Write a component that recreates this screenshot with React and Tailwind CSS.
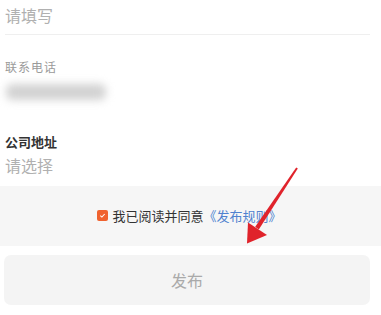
const font = { fontFamily: '"Noto Sans CJK SC", "Noto Sans", sans-serif' };

function Arrow() {
  return (
    <svg className="absolute left-0 top-0 pointer-events-none" width="381" height="315" viewBox="0 0 381 315">
      <polygon points="296.2,167.4 297.8,168.6 258.8,229.4 255.2,226.8" fill="#e0232b" />
      <polygon points="247,243.5 248,222.5 267,235" fill="#e0232b" />
    </svg>
  );
}

export default function App() {
  return (
    <div className="relative w-[381px] h-[315px] overflow-hidden bg-white" style={font}>
      <div className="h-[186px] px-[5px]">
        <div className="h-[35px] w-[365px] border-b border-[#efefef] pt-[7px]">
          <p className="text-[16px] leading-[16px] text-[#b0b0b0]">请填写</p>
        </div>
        <p className="mt-[26px] text-[12px] leading-[12px] text-[#9a9a9a] tracking-[1px]">联系电话</p>
        <div className="mt-[11px] ml-[1px] h-[16px] w-[100px] rounded-[6px] bg-[#d2d2d2] blur-[4px]" />
        <p className="mt-[35px] text-[13px] leading-[13px] font-bold text-[#333]">公司地址</p>
        <p className="mt-[9px] text-[16px] leading-[16px] text-[#b0b0b0]">请选择</p>
      </div>
      <div className="h-[60px] bg-[#f6f6f6] flex items-center justify-center pb-[1px]">
        <div className="flex items-center gap-[4px] text-[13px] leading-[13px] -ml-[2px]">
          <span className="w-[11px] h-[11px] rounded-[2px] bg-[#f0622f] flex items-center justify-center">
            <svg width="7" height="7" viewBox="0 0 8 8">
              <path d="M1.5 4.2 L3.3 5.8 L6.5 2.3" fill="none" stroke="#fff" strokeWidth="1.2" />
            </svg>
          </span>
          <span className="text-[#333]">我已阅读并同意</span>
          <span className="text-[#4f82cf] -ml-[4px]">《发布规则》</span>
        </div>
      </div>
      <div className="pt-[9px] px-[4px]">
        <div className="w-[366px] h-[50px] rounded-[7px] bg-[#f4f4f4] flex items-center justify-center">
          <span className="text-[16px] text-[#aaaaaa]">发布</span>
        </div>
      </div>
      <Arrow />
    </div>
  );
}
